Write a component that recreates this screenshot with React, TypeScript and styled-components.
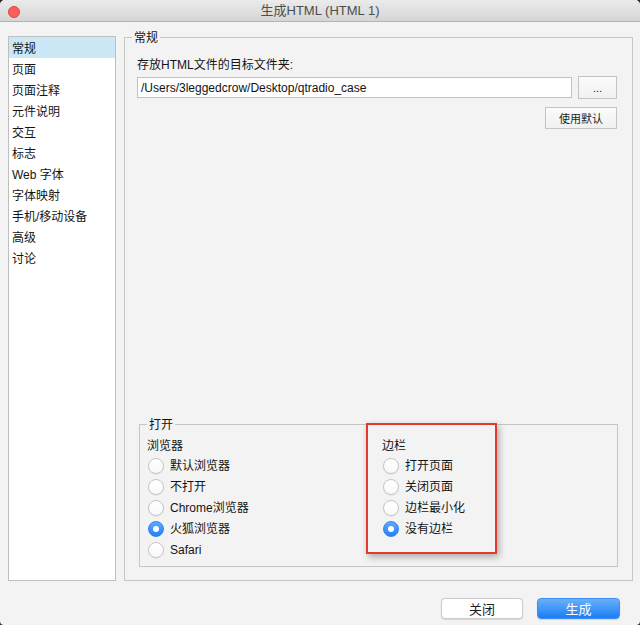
import React from "react";
import styled, { createGlobalStyle } from "styled-components";

const Global = createGlobalStyle`
  html, body { margin: 0; padding: 0; background: #2a2a2a; }
  body { font-family: "Liberation Sans", "Noto Sans CJK SC", sans-serif; font-size: 12px; color: #141414; }
  * { box-sizing: border-box; }
`;

const Window = styled.div`
  width: 640px;
  height: 625px;
  background: #f3f3f3;
  border-radius: 5px 5px 4px 4px;
  overflow: hidden;
  display: flex;
  flex-direction: column;
`;

const TitleBar = styled.div`
  height: 22px;
  flex: none;
  position: relative;
  display: flex;
  align-items: center;
  justify-content: center;
  background: linear-gradient(#ebebeb, #d5d5d5);
  border-bottom: 1px solid #b4b4b4;
  font-size: 13px;
  color: #4d4d4d;
  line-height: 21px;
`;

const CloseDot = styled.span`
  position: absolute;
  left: 8px;
  top: 6px;
  width: 12px;
  height: 12px;
  border-radius: 50%;
  background: #fc5f57;
  border: 1px solid #e2463f;
`;

const Main = styled.div`
  display: flex;
  gap: 8px;
  padding: 14px 7px 0 8px;
  height: 559px;
  flex: none;
`;

const NavList = styled.ul`
  width: 108px;
  height: 545px;
  flex: none;
  margin: 0;
  padding: 0;
  list-style: none;
  background: #fff;
  border: 1px solid #bfbfbf;
`;

const NavItem = styled.li<{ $active?: boolean }>`
  height: 21px;
  line-height: 18px;
  padding: 3px 0 0 3px;
  font-size: 12px;
  background: ${(p) => (p.$active ? "#cbe8f6" : "transparent")};
  white-space: nowrap;
`;

const Group = styled.div`
  position: relative;
  border: 1px solid #c6c6c6;
  display: flex;
  flex-direction: column;
`;

const MainGroup = styled(Group)`
  flex: 1;
  margin-top: 1px;
  height: 544px;
  padding: 19px 15px 13px 12px;
`;

const GroupTitle = styled.span`
  position: absolute;
  top: -8px;
  left: 7px;
  padding: 0 2px;
  line-height: 16px;
  background: #f3f3f3;
  font-size: 12px;
  color: #141414;
`;

const FieldLabel = styled.div`
  line-height: 16px;
  font-size: 12px;
`;

const PathRow = styled.div`
  display: flex;
  align-items: center;
  gap: 6px;
  margin-top: 3px;
  height: 23px;
`;

const PathInput = styled.div`
  flex: 1;
  height: 21px;
  background: #fff;
  border: 1px solid #c2c2c2;
  padding: 1px 0 0 3px;
  line-height: 18px;
  font-size: 12px;
  color: #111;
`;

const QtButton = styled.div<{ $w: number; $h: number }>`
  width: ${(p) => p.$w}px;
  height: ${(p) => p.$h}px;
  flex: none;
  display: flex;
  align-items: center;
  justify-content: center;
  background: linear-gradient(#fbfbfb, #f1f1f1);
  border: 1px solid #c4c4c4;
  font-size: 11px;
  color: #1e1e1e;
`;

const DefaultRow = styled.div`
  display: flex;
  justify-content: flex-end;
  margin-top: 8px;
`;

const Spacer = styled.div`
  flex: 1;
`;

const OpenGroup = styled(Group)`
  margin-left: 2px;
  margin-right: -1px;
  height: 143px;
  padding: 12px 0 6px 8px;
  display: grid;
  grid-template-columns: 235px 1fr;
  align-content: start;
`;

const Column = styled.div`
  display: flex;
  flex-direction: column;
`;

const ColLabel = styled.div`
  height: 18px;
  line-height: 18px;
  font-size: 12px;
  margin-left: -1px;
`;

const RadioRow = styled.div`
  height: 21px;
  display: flex;
  align-items: center;
  gap: 6px;
  font-size: 12px;
  line-height: 21px;
  white-space: nowrap;
`;

const RadioText = styled.span`
  padding-top: 2px;
`;

const RadioDot = styled.span<{ $checked?: boolean }>`
  width: 16px;
  height: 16px;
  flex: none;
  border-radius: 50%;
  display: flex;
  align-items: center;
  justify-content: center;
  background: ${(p) => (p.$checked ? "linear-gradient(#5eaaf9, #2580f3)" : "linear-gradient(#ffffff, #f9f9f9)")};
  border: 1px solid ${(p) => (p.$checked ? "#2d83ee" : "#c6c6c6")};
  box-shadow: ${(p) => (p.$checked ? "none" : "0 0.5px 1px rgba(0,0,0,0.1)")};
  &::after {
    content: "";
    display: ${(p) => (p.$checked ? "block" : "none")};
    width: 6px;
    height: 6px;
    border-radius: 50%;
    background: #fff;
  }
`;

const Highlight = styled.div`
  position: absolute;
  left: 226px;
  top: -2px;
  width: 131px;
  height: 131px;
  border: 2px solid #e5392b;
  box-shadow: 2px 3px 7px rgba(0, 0, 0, 0.3);
  pointer-events: none;
`;

const Footer = styled.div`
  display: flex;
  justify-content: flex-end;
  gap: 14px;
  padding: 17px 20px 0 0;
`;

const MacButton = styled.div<{ $primary?: boolean; $w: number }>`
  width: ${(p) => p.$w}px;
  height: 21px;
  border-radius: 4px;
  display: flex;
  align-items: center;
  justify-content: center;
  font-size: 13px;
  color: ${(p) => (p.$primary ? "#fff" : "#1e1e1e")};
  background: ${(p) => (p.$primary ? "linear-gradient(#68b1fb, #1c7cf6)" : "#fff")};
  border: 1px solid ${(p) => (p.$primary ? "#3c8ef5" : "#cbcbcb")};
  box-shadow: 0 0.5px 1px rgba(0, 0, 0, 0.12);
`;

const navItems = ["常规", "页面", "页面注释", "元件说明", "交互", "标志", "Web 字体", "字体映射", "手机/移动设备", "高级", "讨论"];
const browsers = [
  { label: "默认浏览器" },
  { label: "不打开" },
  { label: "Chrome浏览器" },
  { label: "火狐浏览器", checked: true },
  { label: "Safari" },
];
const sidebar = [
  { label: "打开页面" },
  { label: "关闭页面" },
  { label: "边栏最小化" },
  { label: "没有边栏", checked: true },
];

export default function App() {
  return (
    <>
      <Global />
      <Window>
        <TitleBar>
          <CloseDot />
          生成HTML (HTML 1)
        </TitleBar>
        <Main>
          <NavList>
            {navItems.map((n, i) => (
              <NavItem key={n} $active={i === 0}>
                {n}
              </NavItem>
            ))}
          </NavList>
          <MainGroup>
            <GroupTitle>常规</GroupTitle>
            <FieldLabel>存放HTML文件的目标文件夹:</FieldLabel>
            <PathRow>
              <PathInput>/Users/3leggedcrow/Desktop/qtradio_case</PathInput>
              <QtButton $w={39} $h={23}>...</QtButton>
            </PathRow>
            <DefaultRow>
              <QtButton $w={72} $h={22}>使用默认</QtButton>
            </DefaultRow>
            <Spacer />
            <OpenGroup>
              <GroupTitle>打开</GroupTitle>
              <Column>
                <ColLabel>浏览器</ColLabel>
                {browsers.map((b) => (
                  <RadioRow key={b.label}>
                    <RadioDot $checked={b.checked} />
                    <RadioText>{b.label}</RadioText>
                  </RadioRow>
                ))}
              </Column>
              <Column>
                <ColLabel>边栏</ColLabel>
                {sidebar.map((b) => (
                  <RadioRow key={b.label}>
                    <RadioDot $checked={b.checked} />
                    <RadioText>{b.label}</RadioText>
                  </RadioRow>
                ))}
              </Column>
              <Highlight />
            </OpenGroup>
          </MainGroup>
        </Main>
        <Footer>
          <MacButton $w={82}>关闭</MacButton>
          <MacButton $w={83} $primary>生成</MacButton>
        </Footer>
      </Window>
    </>
  );
}
